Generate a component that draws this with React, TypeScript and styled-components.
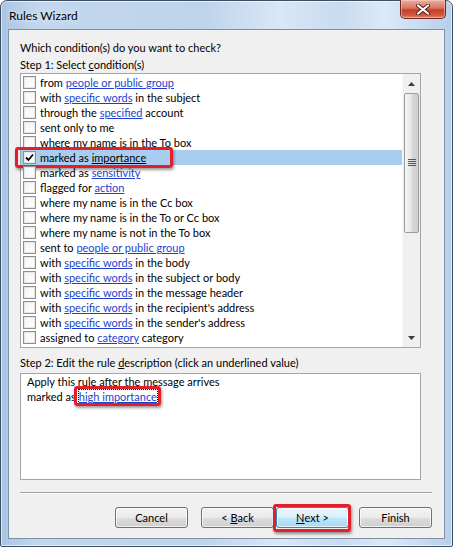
import React from "react";
import styled, { createGlobalStyle } from "styled-components";

const GlobalStyle = createGlobalStyle`
  html, body {
    margin: 0;
    padding: 0;
    background: #ffffff;
  }
  body {
    font-family: Lato, "Liberation Sans", Arial, sans-serif;
    font-size: 11px;
    color: #000;
  }
`;

type Part = { text: string; link?: boolean };
type Condition = { parts: Part[]; checked?: boolean };

const t = (text: string): Part => ({ text });
const l = (text: string): Part => ({ text, link: true });

const conditions: Condition[] = [
  { parts: [t("from "), l("people or public group")] },
  { parts: [t("with "), l("specific words"), t(" in the subject")] },
  { parts: [t("through the "), l("specified"), t(" account")] },
  { parts: [t("sent only to me")] },
  { parts: [t("where my name is in the To box")] },
  { parts: [t("marked as "), l("importance")], checked: true },
  { parts: [t("marked as "), l("sensitivity")] },
  { parts: [t("flagged for "), l("action")] },
  { parts: [t("where my name is in the Cc box")] },
  { parts: [t("where my name is in the To or Cc box")] },
  { parts: [t("where my name is not in the To box")] },
  { parts: [t("sent to "), l("people or public group")] },
  { parts: [t("with "), l("specific words"), t(" in the body")] },
  { parts: [t("with "), l("specific words"), t(" in the subject or body")] },
  { parts: [t("with "), l("specific words"), t(" in the message header")] },
  { parts: [t("with "), l("specific words"), t(" in the recipient's address")] },
  { parts: [t("with "), l("specific words"), t(" in the sender's address")] },
  { parts: [t("assigned to "), l("category"), t(" category")] },
];

const Window = styled.div`
  box-sizing: border-box;
  width: 453px;
  height: 547px;
  display: flex;
  flex-direction: column;
  padding: 0 7px 7px 7px;
  border: 1px solid #3f4f63;
  border-radius: 7px 7px 2px 2px;
  background: linear-gradient(
    to right,
    #a9c4e4 0%,
    #c2d7ee 8%,
    #bed4ec 45%,
    #d9e7f6 62%,
    #c8dbf0 75%,
    #dce9f7 85%,
    #b7cfea 100%
  );
  box-shadow: inset 0 0 0 1px rgba(255, 255, 255, 0.6);
`;

const TitleBar = styled.div`
  height: 28px;
  display: flex;
  align-items: flex-start;
  justify-content: space-between;
`;

const Title = styled.span`
  margin-top: 7px;
  margin-left: 1px;
  font-size: 12px;
  color: #000;
  text-shadow: 0 0 6px rgba(255, 255, 255, 0.9);
`;

const CloseButton = styled.div`
  box-sizing: border-box;
  width: 46px;
  height: 19px;
  margin-right: -1px;
  margin-top: -1px;
  display: flex;
  align-items: center;
  justify-content: center;
  border: 1px solid #6d2a20;
  border-top: none;
  border-radius: 0 0 5px 5px;
  background: linear-gradient(
    to bottom,
    #eab0a2 0%,
    #d9745f 45%,
    #c3402a 55%,
    #cf5a41 85%,
    #e28a6f 100%
  );
  box-shadow: inset 0 0 0 1px rgba(255, 220, 210, 0.45);
`;

const Client = styled.div`
  flex: 1;
  display: flex;
  flex-direction: column;
  background: #f0f0f0;
  border: 1px solid #7f90a6;
  padding: 10px 12px 10px 11px;
`;

const Label = styled.div<{ gap?: number }>`
  height: 15px;
  line-height: 15px;
  margin-top: ${({ gap }) => gap ?? 0}px;
  white-space: nowrap;
`;

const Key = styled.span`
  text-decoration: underline;
`;

const ListBox = styled.div`
  box-sizing: border-box;
  width: 401px;
  height: 275px;
  margin-top: 1px;
  display: flex;
  background: #fff;
  border: 1px solid #a5a5a5;
`;

const Rows = styled.div`
  flex: 1;
  padding-top: 1px;
  display: flex;
  flex-direction: column;
`;

const Row = styled.div<{ selected?: boolean }>`
  position: relative;
  height: 15px;
  display: flex;
  align-items: center;
  gap: 4px;
  padding-left: 2px;
  white-space: nowrap;
  background: ${({ selected }) => (selected ? "#a9cdf0" : "transparent")};
`;

const Box = styled.span`
  box-sizing: border-box;
  width: 13px;
  height: 13px;
  flex: none;
  display: flex;
  align-items: center;
  justify-content: center;
  border: 1px solid #8e8f8f;
  background: linear-gradient(135deg, #f4f4f4 0%, #ffffff 100%);
  box-shadow: inset 0 0 0 1px #e6e6e6;
`;

const Link = styled.span<{ plain?: boolean }>`
  color: ${({ plain }) => (plain ? "#000" : "#1c3fd0")};
  text-decoration: underline;
`;

const RedMark = styled.span<{ inset: string }>`
  position: absolute;
  inset: ${({ inset }) => inset};
  border: 3px solid #e2202c;
  border-radius: 3px;
  box-shadow: 1px 2px 3px rgba(0, 0, 0, 0.4);
  pointer-events: none;
`;

const ScrollBar = styled.div`
  width: 17px;
  display: flex;
  flex-direction: column;
  align-items: center;
  background: #f0f0f0;
  border-left: 1px solid #f7f7f7;
`;

const Arrow = styled.div`
  height: 19px;
  width: 100%;
  display: flex;
  align-items: center;
  justify-content: center;
`;

const Thumb = styled.div`
  box-sizing: border-box;
  width: 15px;
  height: 140px;
  display: flex;
  align-items: center;
  justify-content: center;
  border: 1px solid #9c9c9c;
  border-radius: 2px;
  background: linear-gradient(
    to right,
    #f3f3f3 0%,
    #e9e9e9 45%,
    #d8d8d8 55%,
    #cfcfcf 100%
  );
`;

const Track = styled.div`
  flex: 1;
`;

const Description = styled.div`
  box-sizing: border-box;
  width: 401px;
  height: 107px;
  margin-top: 3px;
  padding: 0 6px;
  background: #fff;
  border: 1px solid #a5a5a5;
`;

const DescLine = styled.div`
  height: 15px;
  line-height: 15px;
  white-space: nowrap;
`;

const Value = styled.span`
  position: relative;
  color: #1c3fd0;
  text-decoration: underline;
  outline: 1px dotted #000;
  outline-offset: 0px;
  margin-left: 3px;
`;

const Separator = styled.div`
  height: 1px;
  margin-top: 12px;
  background: #a0a0a0;
  border-bottom: 1px solid #ffffff;
`;

const ButtonRow = styled.div`
  margin-top: 13px;
  display: flex;
  justify-content: flex-end;
`;

const Button = styled.div<{ primary?: boolean; gap: number }>`
  position: relative;
  box-sizing: border-box;
  width: 73px;
  height: 21px;
  margin-left: ${({ gap }) => gap}px;
  display: flex;
  align-items: center;
  justify-content: center;
  white-space: pre;
  border: 1px solid ${({ primary }) => (primary ? "#3c7fb1" : "#707070")};
  border-radius: 3px;
  background: ${({ primary }) =>
    primary
      ? "linear-gradient(to bottom, #eaf6fd 0%, #d9f0fc 50%, #bee6fd 51%, #a7d9f5 100%)"
      : "linear-gradient(to bottom, #f2f2f2 0%, #ebebeb 50%, #dddddd 51%, #cfcfcf 100%)"};
  box-shadow: inset 0 0 0 1px rgba(255, 255, 255, 0.7);
`;

const Checkmark = () => (
  <svg width="9" height="9" viewBox="0 0 9 9">
    <path d="M1 4.5 L3.5 7 L8 1.5" fill="none" stroke="#000" strokeWidth="1.8" />
  </svg>
);

const UpArrow = () => (
  <svg width="7" height="4" viewBox="0 0 7 4">
    <path d="M0 4 L3.5 0 L7 4 Z" fill="#3c3c3c" />
  </svg>
);

const DownArrow = () => (
  <svg width="7" height="4" viewBox="0 0 7 4">
    <path d="M0 0 L7 0 L3.5 4 Z" fill="#3c3c3c" />
  </svg>
);

const Grip = () => (
  <svg width="8" height="8" viewBox="0 0 8 8">
    {[0, 2, 4, 6].map((y) => (
      <rect key={y} x="0" y={y} width="8" height="1" fill="#555" />
    ))}
  </svg>
);

const CloseGlyph = () => (
  <svg width="14" height="11" viewBox="0 0 14 11">
    <path
      d="M2 1.5 L12 9.5 M12 1.5 L2 9.5"
      stroke="#5a1d14"
      strokeWidth="4"
      strokeLinecap="round"
    />
    <path
      d="M2 1.5 L12 9.5 M12 1.5 L2 9.5"
      stroke="#fff"
      strokeWidth="2.2"
      strokeLinecap="round"
    />
  </svg>
);

export default function App() {
  return (
    <>
      <GlobalStyle />
      <Window>
        <TitleBar>
          <Title>Rules Wizard</Title>
          <CloseButton>
            <CloseGlyph />
          </CloseButton>
        </TitleBar>
        <Client>
          <Label>Which condition(s) do you want to check?</Label>
          <Label gap={2}>
            Step 1: Select <Key>c</Key>ondition(s)
          </Label>
          <ListBox>
            <Rows>
              {conditions.map((c, i) => (
                <Row key={i} selected={c.checked}>
                  <Box>{c.checked && <Checkmark />}</Box>
                  <span>
                    {c.parts.map((p, j) =>
                      p.link ? (
                        <Link key={j} plain={c.checked}>
                          {p.text}
                        </Link>
                      ) : (
                        <React.Fragment key={j}>{p.text}</React.Fragment>
                      )
                    )}
                  </span>
                  {c.checked && <RedMark inset="-3px auto -3px -6px" style={{ width: 152 }} />}
                </Row>
              ))}
            </Rows>
            <ScrollBar>
              <Arrow>
                <UpArrow />
              </Arrow>
              <Thumb>
                <Grip />
              </Thumb>
              <Track />
              <Arrow>
                <DownArrow />
              </Arrow>
            </ScrollBar>
          </ListBox>
          <Label gap={7}>
            Step 2: Edit the rule <Key>d</Key>escription (click an underlined value)
          </Label>
          <Description>
            <DescLine>Apply this rule after the message arrives</DescLine>
            <DescLine>
              marked as
              <Value>
                high importance
                <RedMark inset="-4px -4px -3px -5px" />
              </Value>
            </DescLine>
          </Description>
          <Separator />
          <ButtonRow>
            <Button gap={0}>Cancel</Button>
            <Button gap={13}>
              {"< "}
              <Key>B</Key>
              {"ack"}
            </Button>
            <Button gap={2} primary>
              <Key>N</Key>
              {"ext >"}
              <RedMark inset="-4px -3px -5px -4px" />
            </Button>
            <Button gap={10}>Finish</Button>
          </ButtonRow>
        </Client>
      </Window>
    </>
  );
}
